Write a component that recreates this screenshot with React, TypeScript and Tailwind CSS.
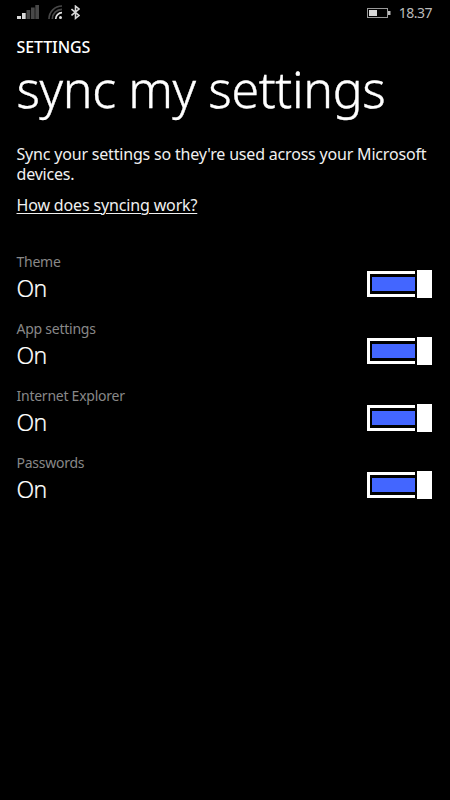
import React from 'react';

type Setting = {
  label: string;
  value: string;
};

const settings: Setting[] = [
  { label: 'Theme', value: 'On' },
  { label: 'App settings', value: 'On' },
  { label: 'Internet Explorer', value: 'On' },
  { label: 'Passwords', value: 'On' },
];

function SignalIcon() {
  return (
    <svg className="mt-[5px] h-[14px] w-[22px]" viewBox="0 0 22 14">
      <rect x="0" y="11" width="4" height="3" fill="#d8d8d8" />
      <rect x="5" y="8" width="3.7" height="6" fill="#d8d8d8" />
      <rect x="9.5" y="5" width="3.7" height="9" fill="#484848" />
      <rect x="14" y="2.5" width="3.7" height="11.5" fill="#484848" />
      <rect x="18.3" y="0" width="3.7" height="14" fill="#484848" />
    </svg>
  );
}

function WifiIcon() {
  return (
    <svg className="ml-[9px] mt-[5px] h-[14px] w-[14px]" viewBox="0 0 14 14" fill="none" strokeWidth="1.7">
      <path d="M1 14A13 13 0 0 1 14 1" stroke="#484848" />
      <path d="M4.3 14A9.7 9.7 0 0 1 14 4.3" stroke="#484848" />
      <path d="M7.7 14A6.3 6.3 0 0 1 14 7.7" stroke="#e0e0e0" />
      <circle cx="12.5" cy="12.5" r="1.5" fill="#e0e0e0" />
    </svg>
  );
}

function BluetoothIcon() {
  return (
    <svg className="ml-[9px] mt-[5px] h-[15px] w-[9px]" viewBox="0 0 9 15" fill="none" stroke="#d8d8d8" strokeWidth="1.6">
      <path d="M0.5 4L8 10.5L4.5 13.3V1.2L8 4L0.5 10.5" />
    </svg>
  );
}

function BatteryIcon() {
  return (
    <svg className="mr-[8px] mt-[8px] h-[10px] w-[24px]" viewBox="0 0 24 10">
      <rect x="0.5" y="0.5" width="20" height="9" fill="none" stroke="#999" />
      <rect x="2" y="2" width="8" height="6" fill="#d8d8d8" />
      <rect x="21" y="3" width="2.5" height="4" fill="#bbb" />
    </svg>
  );
}

function Toggle() {
  return (
    <div className="flex h-[28px] w-[65px] items-center">
      <div className="h-[26px] w-[48px] border-[3px] border-r-0 border-white py-[3px] pl-[2px]">
        <div className="h-full bg-[#4366ff]" />
      </div>
      <div className="ml-[2px] h-[28px] w-[15px] bg-white" />
    </div>
  );
}

export default function App() {
  return (
    <div className="flex h-[800px] w-[450px] flex-col bg-black font-['Noto_Sans','Open_Sans',sans-serif] text-white">
      <header className="flex h-[26px] items-start pl-[17px] pr-[18px]">
        <SignalIcon />
        <WifiIcon />
        <BluetoothIcon />
        <div className="grow" />
        <BatteryIcon />
        <span className="mt-[4px] text-[14px] leading-[18px] tracking-[-0.5px] text-[#bbb]">18.37</span>
      </header>
      <main className="pl-[16.5px] pr-[16px]">
        <p className="mt-[11px] text-[16px] font-medium leading-[20px] tracking-[-0.1px]">SETTINGS</p>
        <h1 className="h-[71px] whitespace-nowrap text-[50px] font-light leading-[64px] tracking-[-0.35px] [-webkit-text-stroke:0.4px_white]">sync my settings</h1>
        <p className="mt-[17px] whitespace-nowrap text-[16px] leading-[19.5px] tracking-[-0.19px] text-[#f0f0f0]">
          Sync your settings so they're used across your Microsoft
          <br />
          devices.
        </p>
        <a className="mt-[10px] block w-fit text-[16px] leading-[22px] tracking-[-0.15px] text-[#f0f0f0] underline decoration-1 underline-offset-[2px]">How does syncing work?</a>
        <div className="mt-[36px]">
          {settings.map((item) => (
            <div key={item.label} className="flex h-[67px] justify-between">
              <div>
                <p className="text-[14px] leading-[20px] tracking-[-0.25px] text-[#888]">{item.label}</p>
                <p className="mt-px text-[23px] font-light leading-[30px] tracking-[-0.6px] [-webkit-text-stroke:0.2px_white]">{item.value}</p>
              </div>
              <div className="mt-[18px] mr-[2px]">
                <Toggle />
              </div>
            </div>
          ))}
        </div>
      </main>
    </div>
  );
}
